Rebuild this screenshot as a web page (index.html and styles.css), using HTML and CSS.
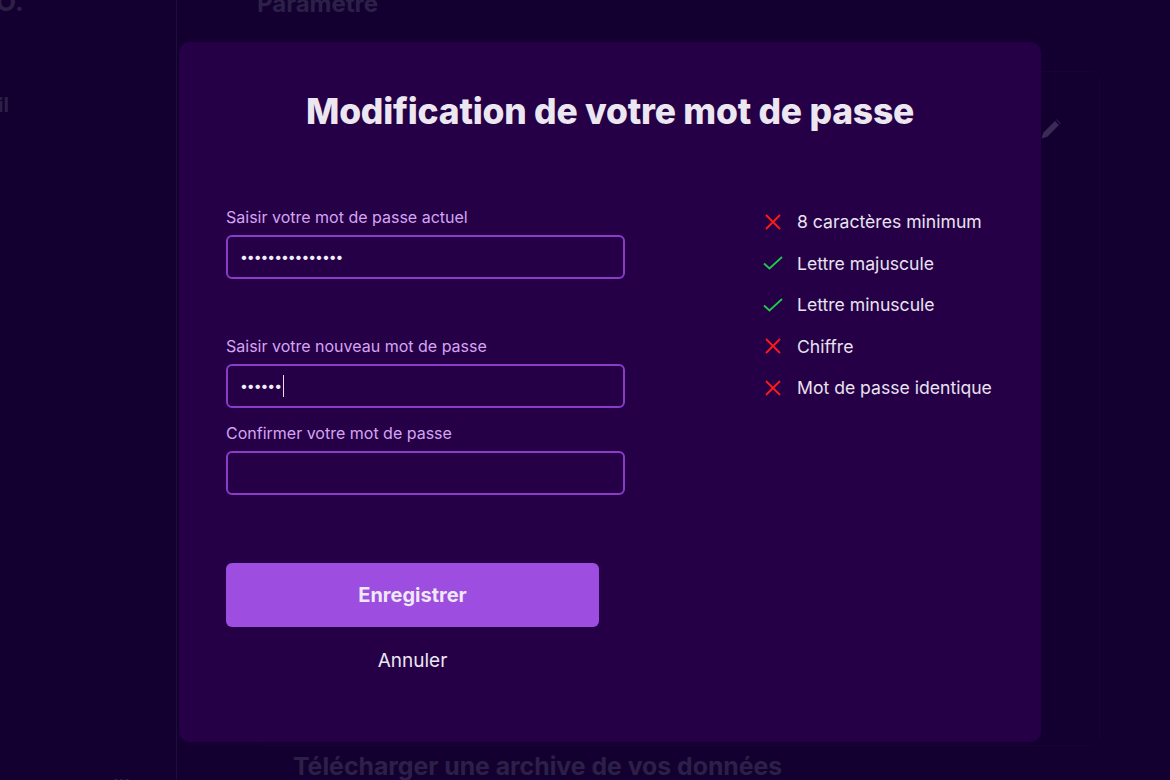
FILE: index.html
```html
<!DOCTYPE html>
<html lang="fr">
<head>
<meta charset="utf-8">
<title>Modification de votre mot de passe</title>
<link rel="stylesheet" href="styles.css">
</head>
<body>
<div class="app">
  <aside class="sidebar">
    <div class="logo">O.</div>
    <div class="nav-item">il</div>
    <div class="sidebar-bottom">•••</div>
  </aside>
  <main class="main">
    <h1 class="page-title">Paramètre</h1>
    <div class="main-card">
      <svg class="pencil" width="28" height="28" viewBox="0 0 24 24"><path d="M3 21l1.5-5L16 4.5l3.5 3.5L8 19.5z" fill="#3a2a55"/><path d="M15 5.5l3.5 3.5" stroke="#160033" stroke-width="1.5"/></svg>
    </div>
    <h2 class="section-title">Télécharger une archive de vos données</h2>
  </main>
</div>

<div class="modal">
  <h1 class="modal-title">Modification de votre mot de passe</h1>
  <div class="modal-body">
    <form class="form">
      <div class="field">
        <label class="label">Saisir votre mot de passe actuel</label>
        <div class="input"><span class="dots">•••••••••••••••</span></div>
      </div>
      <div class="field field-gap">
        <label class="label">Saisir votre nouveau mot de passe</label>
        <div class="input"><span class="dots">••••••</span><span class="caret"></span></div>
      </div>
      <div class="field field-tight">
        <label class="label">Confirmer votre mot de passe</label>
        <div class="input"></div>
      </div>
      <button type="button" class="btn">Enregistrer</button>
      <div class="cancel">Annuler</div>
    </form>
    <ul class="rules">
      <li class="rule"><svg class="ico" viewBox="0 0 20 20"><path d="M3 3l14 14M17 3L3 17" stroke="#ff1a1a" stroke-width="1.8" fill="none"/></svg>8 caractères minimum</li>
      <li class="rule"><svg class="ico" viewBox="0 0 20 20"><path d="M1 10.5l5.5 5L19 4" stroke="#1fc94a" stroke-width="1.8" fill="none"/></svg>Lettre majuscule</li>
      <li class="rule"><svg class="ico" viewBox="0 0 20 20"><path d="M1 10.5l5.5 5L19 4" stroke="#1fc94a" stroke-width="1.8" fill="none"/></svg>Lettre minuscule</li>
      <li class="rule"><svg class="ico" viewBox="0 0 20 20"><path d="M3 3l14 14M17 3L3 17" stroke="#ff1a1a" stroke-width="1.8" fill="none"/></svg>Chiffre</li>
      <li class="rule"><svg class="ico" viewBox="0 0 20 20"><path d="M3 3l14 14M17 3L3 17" stroke="#ff1a1a" stroke-width="1.8" fill="none"/></svg>Mot de passe identique</li>
    </ul>
  </div>
</div>
</body>
</html>
```

FILE: styles.css
```css
* { box-sizing: border-box; }
html, body {
  margin: 0;
  padding: 0;
  width: 1170px;
  height: 780px;
  overflow: hidden;
  background: #130030;
  font-family: Inter, "Noto Sans", sans-serif;
}
.app {
  display: flex;
  height: 780px;
}
.sidebar {
  width: 177px;
  border-right: 1px solid #1f0e3a;
  background: #130030;
  display: flex;
  flex-direction: column;
  color: #2c2048;
  font-weight: 700;
}
.logo {
  font-size: 26px;
  margin-top: -14px;
  margin-left: -4px;
  height: 30px;
}
.nav-item {
  margin-top: 77px;
  margin-left: -2px;
  font-size: 20px;
}
.sidebar-bottom {
  margin-top: auto;
  margin-left: 112px;
  margin-bottom: -10px;
  font-size: 16px;
  letter-spacing: -2px;
}
.main {
  flex: 1;
  display: flex;
  flex-direction: column;
  padding-left: 80px;
  color: #2c2048;
}
.page-title {
  margin: -8px 0 0 0;
  font-size: 24px;
  font-weight: 700;
  height: 24px;
  line-height: 24px;
}
.main-card {
  margin-top: 55px;
  flex: 1;
  margin-right: 70px;
  border: 1px solid #170434;
  border-radius: 8px;
  position: relative;
}
.pencil {
  position: absolute;
  right: 33px;
  top: 42px;
}
.section-title {
  margin: 5px 0 -1px 36px;
  font-size: 24.8px;
  font-weight: 700;
  line-height: 30px;
}

.modal {
  position: absolute;
  left: 179px;
  top: 42px;
  width: 862px;
  height: 700px;
  background: #250047;
  border-radius: 10px;
  padding: 0 47px;
}
.modal-title {
  margin: 48px 0 0 0;
  text-align: center;
  color: #ebe6ef;
  font-size: 35.4px;
  font-weight: 800;
  line-height: 44px;
  letter-spacing: -0.2px;
}
.modal-body {
  display: flex;
  margin-top: 73px;
}
.form {
  width: 399px;
  flex: none;
  display: flex;
  flex-direction: column;
}
.field {
  display: flex;
  flex-direction: column;
}
.field-gap { margin-top: 57px; }
.field-tight { margin-top: 15px; }
.label {
  color: #d5a5f2;
  font-size: 16px;
  line-height: 20px;
  margin-bottom: 8px;
}
.input {
  height: 44px;
  border: 2px solid #8a3cc9;
  border-radius: 6px;
  display: flex;
  align-items: center;
  padding-left: 12px;
}
.dots {
  color: #f2eef6;
  font-size: 14px;
  letter-spacing: -1.05px;
  line-height: 1;
}
.caret {
  width: 1px;
  height: 22px;
  background: #e6e0ee;
  margin-left: 2px;
}
.btn {
  margin-top: 68px;
  width: 373px;
  height: 64px;
  background: #9d4ddf;
  border: none;
  border-radius: 6px;
  color: #efe8f5;
  font-family: Inter, "Noto Sans", sans-serif;
  font-size: 20px;
  font-weight: 700;
  cursor: pointer;
}
.cancel {
  width: 373px;
  text-align: center;
  color: #ebe6ef;
  font-size: 19px;
  margin-top: 22px;
}
.rules {
  list-style: none;
  margin: 3px 0 0 138px;
  padding: 0;
  display: flex;
  flex-direction: column;
  gap: 18px;
  white-space: nowrap;
}
.rule {
  display: flex;
  align-items: center;
  color: #e9e2f0;
  font-size: 17.6px;
  line-height: 23.5px;
}
.ico {
  width: 20px;
  height: 20px;
  margin-right: 14px;
}
```
